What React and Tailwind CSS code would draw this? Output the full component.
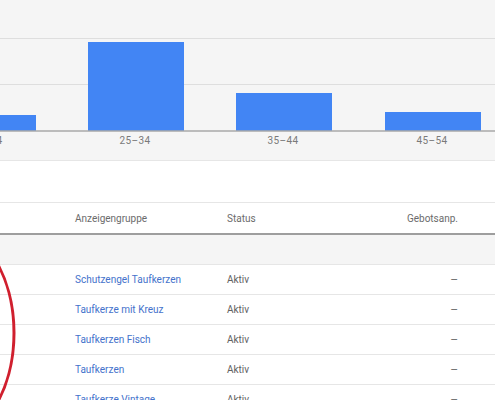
const bars = [
  { label: '18–24', x: -60, top: 115 },
  { label: '25–34', x: 88, top: 42 },
  { label: '35–44', x: 236, top: 93 },
  { label: '45–54', x: 385, top: 112 },
];

const rows = [
  'Schutzengel Taufkerzen',
  'Taufkerze mit Kreuz',
  'Taufkerzen Fisch',
  'Taufkerzen',
  'Taufkerze Vintage',
];

const AgeChart = () => (
  <div className="h-[161px] bg-[#f5f5f5] border-b border-[#e6e6e6]">
    <svg width="495" height="160" viewBox="0 0 495 160">
      <line x1="0" y1="38.5" x2="495" y2="38.5" stroke="#dedede" strokeWidth="1" />
      <line x1="0" y1="84.5" x2="495" y2="84.5" stroke="#dedede" strokeWidth="1" />
      {bars.map((b) => (
        <rect key={b.label} x={b.x} y={b.top} width="96" height={131 - b.top} fill="#4285f4" />
      ))}
      <line x1="0" y1="131" x2="495" y2="131" stroke="#a8a8a8" strokeWidth="1.5" />
      {bars.map((b) => (
        <text
          key={b.label + 't'}
          x={b.x + 47}
          y="143.5"
          textAnchor="middle"
          fontSize="10"
          fill="#7a7a7a"
          letterSpacing="0.4"
          fontFamily="Roboto, 'Liberation Sans', sans-serif"
        >
          {b.label}
        </text>
      ))}
    </svg>
  </div>
);

const App = () => {
  return (
    <div className="relative w-[495px] h-[400px] overflow-hidden bg-white font-['Roboto','Liberation_Sans',sans-serif] text-[10px]">
      <AgeChart />
      <div className="h-[41px]" />

      {/* Tabellenkopf */}
      <div className="grid grid-cols-[75px_152px_1fr_auto] items-center h-[33px] border-t border-b-2 border-t-[#e6e6e6] border-b-[#9e9e9e] pr-[37px] text-[#6b6b6b]">
        <div />
        <div>Anzeigengruppe</div>
        <div>Status</div>
        <div>Gebotsanp.</div>
      </div>

      <div className="h-[30px] bg-[#f5f5f5] border-b border-[#e6e6e6]" />

      {rows.map((name) => (
        <div
          key={name}
          className="grid grid-cols-[75px_152px_1fr_auto] items-center h-[30px] border-b border-[#e6e6e6] pr-[37px]"
        >
          <div />
          <div className="text-[#4472cb]">{name}</div>
          <div className="text-[#616161]">Aktiv</div>
          <div className="text-[#757575] text-[12px] leading-none">–</div>
        </div>
      ))}

      {/* Markierung */}
      <svg className="absolute left-0 top-0 pointer-events-none" width="495" height="400">
        <ellipse cx="-60" cy="333" rx="74" ry="110" fill="none" stroke="#d01f2e" strokeWidth="3" />
      </svg>
    </div>
  );
};

export default App;
